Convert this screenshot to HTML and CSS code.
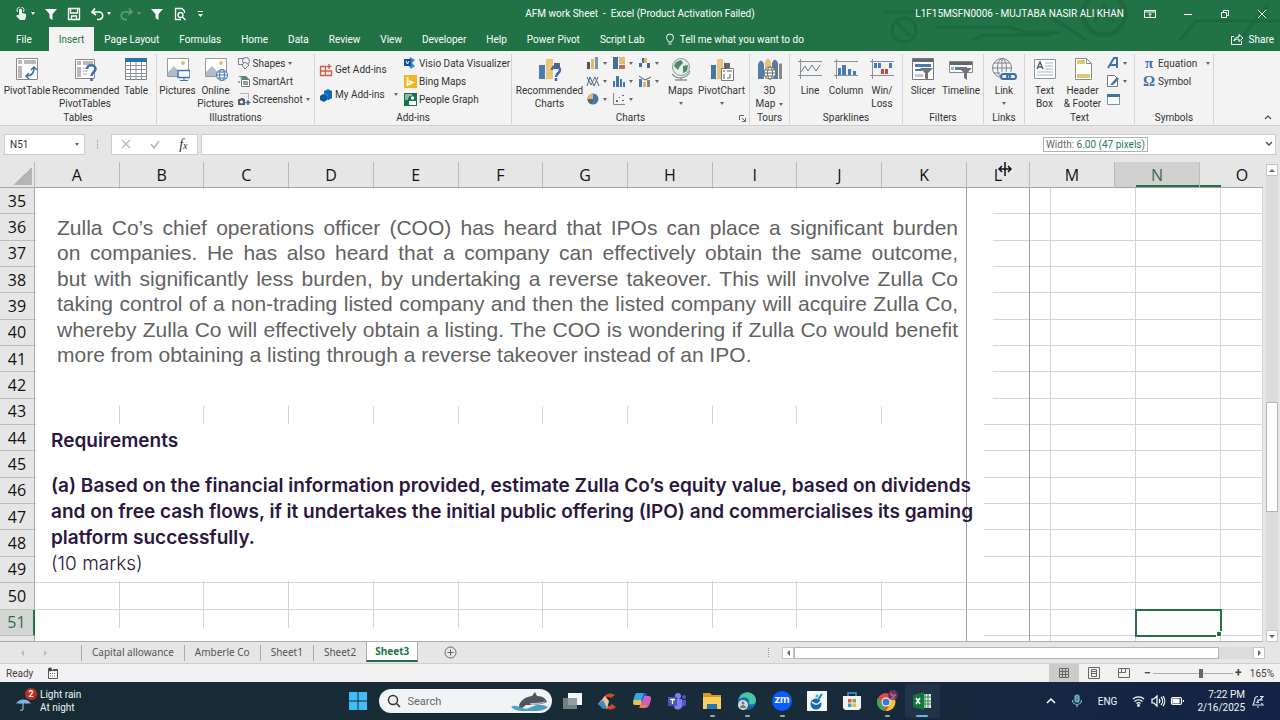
FILE: index.html
```html
<!DOCTYPE html>
<html lang="en">
<head>
    <meta charset="UTF-8">
    <meta name="viewport" content="width=device-width, initial-scale=1.0">
    <title>AFM work Sheet - Excel</title>
    <link rel="stylesheet" href="styles.css">
</head>
<body>
    <header class="top">
        <svg class="circuit" width="420" height="51" viewBox="0 0 420 51" fill="none" stroke="#1b633b" stroke-width="3">
            <path d="M24 12H70M76 27H150L168 33H200M112 40L124 35H190M192 18L226 40M320 40L336 21H420M380 40L408 4"/>
            <circle cx="44" cy="30" r="12"/><path d="M36 22L50 36"/>
            <circle cx="244" cy="14" r="21" stroke-width="5"/><path d="M234 22L244 6L254 22"/>
        </svg>

        <div class="titlebar">
            <div class="quick">
                <button aria-label="Touch mode"><svg width="14" height="14" viewBox="0 0 14 14"><path d="M5 8V3a1.500 1.500 0 0 1 3 0v3l4 1v3l-1 3H6L2 9l1-1z" fill="#e8f3ec"/><path d="M3.500 5a3.500 3.500 0 1 1 6 0" fill="none" stroke="#e8f3ec"/></svg><i class="caret"></i></button>
                <button aria-label="Filter"><svg width="14" height="14" viewBox="0 0 14 14"><path d="M1 2h12L8.500 7v6l-3-2V7z" fill="#fff"/></svg></button>
                <button aria-label="Save"><svg width="14" height="14" viewBox="0 0 14 14" fill="none" stroke="#fff" stroke-width="1.300"><path d="M1.500 1.500h11v11h-11zM3.500 2v4h7V2M4.500 12V9h5v3"/></svg></button>
                <button aria-label="Undo"><svg width="14" height="14" viewBox="0 0 14 14" fill="none" stroke="#fff" stroke-width="1.700"><path d="M5 1.500L2 5l4 3M2.500 5H9a3.500 3.500 0 0 1 0 7.500H7"/></svg><i class="caret"></i></button>
                <button class="dim" aria-label="Redo"><svg width="14" height="14" viewBox="0 0 14 14" fill="none" stroke="#fff" stroke-width="1.500"><path d="M9 1.500L12 5 8 8M11.500 5H5a3.500 3.500 0 0 0 0 7.500h2"/></svg><i class="caret"></i></button>
                <button aria-label="Filter"><svg width="14" height="14" viewBox="0 0 14 14"><path d="M1 2h12L8.500 7v6l-3-2V7z" fill="#fff"/></svg></button>
                <button aria-label="Print preview"><svg width="14" height="14" viewBox="0 0 14 14" fill="none" stroke="#fff" stroke-width="1.300"><path d="M11.500 6V4L9 1.500H2.500v11H8"/><circle cx="7.500" cy="8" r="2.500"/><path d="M9.500 10l3 3"/></svg></button>
                <button aria-label="Customize toolbar"><svg width="8" height="8" viewBox="0 0 8 8"><path d="M2 1h5v1H2zM2 4h5L4.500 7z" fill="#fff"/></svg></button>
            </div>
            <h1 class="doc-title">AFM work Sheet&nbsp; -&nbsp; Excel (Product Activation Failed)</h1>
            <div class="account">
                <span class="user">L1F15MSFN0006 - MUJTABA NASIR ALI KHAN</span>
                <button aria-label="Ribbon options"><svg width="12" height="10" viewBox="0 0 12 10" fill="none" stroke="#fff"><path d="M.5 1.500h11v7H.5zM.5 3h11M6 8V4.500M4.500 6L6 4.500 7.500 6"/></svg></button>
                <button aria-label="Minimize"><svg width="10" height="10" viewBox="0 0 10 10" stroke="#fff"><path d="M1 5.500h8"/></svg></button>
                <button aria-label="Restore"><svg width="10" height="10" viewBox="0 0 10 10" fill="none" stroke="#fff"><path d="M1.500 3.500h5v5h-5zM3.500 3V1.500h5v5H7"/></svg></button>
                <button aria-label="Close"><svg width="10" height="10" viewBox="0 0 10 10" stroke="#fff"><path d="M1 1l8 8M9 1L1 9"/></svg></button>
            </div>
        </div>

        <nav class="tabs">
            <button class="file">File</button>
            <button class="active">Insert</button>
            <button>Page Layout</button>
            <button>Formulas</button>
            <button>Home</button>
            <button>Data</button>
            <button>Review</button>
            <button>View</button>
            <button>Developer</button>
            <button>Help</button>
            <button>Power Pivot</button>
            <button>Script Lab</button>
            <button class="tell"><svg width="10" height="13" viewBox="0 0 10 13" fill="none" stroke="#fff"><path d="M3.500 9C3 7 1.500 6.500 1.500 4.500a3.500 3.500 0 0 1 7 0C8.500 6.500 7 7 6.500 9zM3.500 11h3"/></svg>Tell me what you want to do</button>
            <button class="share"><svg width="13" height="12" viewBox="0 0 13 12" fill="none" stroke="#fff"><path d="M3 3.500H.5v8h10V8M3 8c.5-3 2-4 5-4V1.500L12 5 8 8.500V6C5.500 6 4 6.500 3 8z"/></svg>Share</button>
        </nav>
    </header>

    <section class="ribbon" aria-label="Insert">
        <div class="group">
            <div class="tools tables">
                <button class="big"><svg width="24" height="24" viewBox="0 0 24 24"><path d="M1.500 1.500h21v21h-21z" fill="#fff" stroke="#8a8a8a"/><path d="M3 3h4v4H3zM9 3h12v4H9zM3 9h4v12H3z" fill="#b9b9b9"/><path d="M11 19c5 0 8-2 8-8M16 13l3-3 3 3M14 16l-3 3 3 3" fill="none" stroke="#3c6db0" stroke-width="1.500"/></svg>PivotTable</button>
                <button class="big"><svg width="24" height="24" viewBox="0 0 24 24"><path d="M2.500 2.500h19v19h-19z" fill="#fff" stroke="#8a8a8a"/><path d="M4 4h4v4H4zM10 4h10v4H10zM4 10h4v10H4z" fill="#b9b9b9"/><path d="M10 11h6M10 14h5M10 17h4" stroke="#aaa"/><path d="M14 12c0-5 8.500-5 8.500 0 0 3-4 3-4 7M18.500 21v3" fill="none" stroke="#3c6db0" stroke-width="2.600"/></svg>Recommended<br>PivotTables</button>
                <button class="big"><svg width="24" height="24" viewBox="0 0 24 24"><path d="M1.500 1.500h21v21h-21z" fill="#fff" stroke="#808080"/><path d="M1 1h22v4H1z" fill="#2d70ac"/><path d="M1 8.500h22M1 12.500h22M1 16.500h22M1 19.500h22M6.500 5v18M12 5v18M17.500 5v18" stroke="#8b9299"/></svg>Table</button>
            </div>
            <h2>Tables</h2>
        </div>

        <div class="group">
            <div class="tools illustrations">
                <button class="big"><svg width="24" height="24" viewBox="0 0 24 24"><path d="M1.500 1.500h21v18h-21z" fill="#fff" stroke="#999"/><circle cx="17" cy="6" r="2" fill="#dcc06c"/><path d="M2 19v-4l6-6 9 10z" fill="#b2bdcc"/><path d="M12 13.500h12v7H12z" fill="#fff" stroke="#3c75bc" stroke-width="1.500"/><path d="M18 21v2M14 23.500h8" stroke="#3c75bc"/></svg>Pictures</button>
                <button class="big"><svg width="24" height="24" viewBox="0 0 24 24"><path d="M1.500 1.500h21v18h-21z" fill="#fff" stroke="#999"/><circle cx="17" cy="6" r="2" fill="#dcc06c"/><path d="M2 19v-4l6-6 9 10z" fill="#b2bdcc"/><g fill="#fff" stroke="#4378ae"><circle cx="18" cy="18" r="5.500"/><ellipse cx="18" cy="18" rx="2.500" ry="5.500"/><path d="M12.500 18h11M13.500 15h9M13.500 21h9"/></g></svg>Online<br>Pictures</button>
                <div class="list">
                    <button><svg width="14" height="14" viewBox="0 0 14 14" fill="#f3f3f3" stroke="#6c7c91"><path d="M1.500 2.500h7v6h-7z"/><circle cx="9" cy="5" r="3.500"/><path d="M8 6l4 3-4 4-3-4z"/></svg>Shapes<i class="caret"></i></button>
                    <button><svg width="14" height="14" viewBox="0 0 14 14"><path d="M1 2h8l3 3H3l2-1z" fill="#568875"/><path d="M4.500 5.500h8v7h-8z" fill="#fff" stroke="#777"/><path d="M6 7h5v4H6zM1 7h2v2H1z" fill="#87a798"/></svg>SmartArt</button>
                    <button><svg width="14" height="14" viewBox="0 0 14 14"><path d="M3.500 1.500h8v6" fill="none" stroke="#777" stroke-dasharray="1 1"/><path d="M1 7h2l1-1h2l1 1h1v6H1z" fill="#53606c"/><circle cx="4.500" cy="10" r="1.500" fill="#fff"/><path d="M11 8v5M8.500 10.500h5" stroke="#2c69a5" stroke-width="1.500"/></svg>Screenshot<i class="caret"></i></button>
                </div>
            </div>
            <h2>Illustrations</h2>
        </div>

        <div class="group">
            <div class="tools addins">
                <div class="list loose">
                    <button><svg width="14" height="14" viewBox="0 0 14 14" fill="none" stroke="#d35a44" stroke-width="1.300"><path d="M1.500 3.500h5v9h-5zM1.500 8h11v4.500h-6M6.500 3.500V8M10 1v5M7.500 3.500h5"/></svg>Get Add-ins</button>
                    <button><svg width="14" height="14" viewBox="0 0 14 14"><path d="M5 3l4-2 4 2v7l-4 2-4-2z" fill="#1979cb"/><path d="M1 8l3-2 4 2v4l-3 2-4-2z" fill="#0b569f"/><path d="M5 3l4 3v6l4-2V3z" fill="#1167b6"/></svg>My Add-ins<i class="caret wide"></i></button>
                </div>
                <div class="list">
                    <button><svg width="14" height="14" viewBox="0 0 14 14"><path d="M7 1l5 3-3 3 3 3-4 3-3-4z" fill="#338bd6"/><path d="M1 3h7v7H1z" fill="#174f9e"/><path d="M3 5l1.500 3L6 5" fill="none" stroke="#fff"/></svg>Visio Data Visualizer</button>
                    <button><svg width="14" height="14" viewBox="0 0 14 14"><path d="M1 1h13v13H1z" fill="#f1b51d"/><path d="M4.500 3v8l5-2.500L6 7" fill="none" stroke="#fff" stroke-width="1.800"/></svg>Bing Maps</button>
                    <button><svg width="14" height="14" viewBox="0 0 14 14"><path d="M1 1h13v13H1z" fill="#19714d"/><path d="M2 3h7M2 5h4M2 7h3" stroke="#fff"/><circle cx="9.500" cy="6" r="1.700" fill="#fff"/><path d="M6 13V9h7v4z" fill="#fff"/></svg>People Graph</button>
                </div>
            </div>
            <h2>Add-ins</h2>
        </div>

        <div class="group">
            <div class="tools charts">
                <button class="big"><svg width="24" height="24" viewBox="0 0 24 24"><path d="M1 8h6v14H1z" fill="#4c7cad"/><path d="M8 2h7v20H8z" fill="#e9c57b"/><path d="M16 6h6v6h-6z" fill="#666"/><path d="M14 13c0-5 8-5 8 0 0 3-4 3-4 7M18 21v3" fill="none" stroke="#3269b1" stroke-width="2.500"/></svg>Recommended<br>Charts</button>
                <div class="chart-grid">
                    <button aria-label="Column chart"><svg width="14" height="14" viewBox="0 0 14 14"><path d="M1 6h3v7H1z" fill="#555"/><path d="M5 3h3v10H5z" fill="#e1b961"/><path d="M9 1h3v12H9z" fill="#7c92aa"/></svg><i class="caret"></i></button>
                    <button aria-label="Hierarchy chart"><svg width="14" height="14" viewBox="0 0 14 14"><path d="M1 1h5v12H1z" fill="#416f9e"/><path d="M7 1h6v7H7z" fill="#e3bd72"/><path d="M7 9h6v4H7z" fill="#c56b50"/></svg><i class="caret"></i></button>
                    <button aria-label="Waterfall chart"><svg width="14" height="14" viewBox="0 0 14 14"><path d="M1 7h3v4H1zM4 2h2v5H4z" fill="#3d6b9c"/><path d="M6 2h3v5H6z" fill="#e1b961"/><path d="M9 7h3v5H9z" fill="#3d6b9c"/></svg><i class="caret"></i></button>
                    <button aria-label="Line chart"><svg width="14" height="14" viewBox="0 0 14 14" fill="none"><path d="M1 12L4 3l4 9 4-9" stroke="#3d6b9c"/><path d="M1 3l4 8 4-8 4 9" stroke="#666"/></svg><i class="caret"></i></button>
                    <button aria-label="Statistic chart"><svg width="14" height="14" viewBox="0 0 14 14"><path d="M1 7h2v6H1zM4 2h3v11H4zM8 5h2v8H8zM11 8h2v5h-2z" fill="#4577aa"/></svg><i class="caret"></i></button>
                    <button aria-label="Combo chart"><svg width="14" height="14" viewBox="0 0 14 14"><path d="M1 5h3v8H1z" fill="#4577aa"/><path d="M5 8h3v5H5z" fill="#e1b961"/><path d="M9 6h3v7H9z" fill="#888"/><path d="M1 2l6 4 6-3" fill="none" stroke="#555"/></svg><i class="caret"></i></button>
                    <button aria-label="Pie chart"><svg width="14" height="14" viewBox="0 0 14 14"><circle cx="7" cy="7" r="5.500" fill="#4577aa"/><path d="M7 7V1.500A5.500 5.500 0 0 0 1.500 7z" fill="#e0ba70"/><path d="M7 7H1.500A5.500 5.500 0 0 0 5 12z" fill="#666"/></svg><i class="caret"></i></button>
                    <button aria-label="Scatter chart"><svg width="14" height="14" viewBox="0 0 14 14"><path d="M1.500 1v11.500H13" fill="none" stroke="#888"/><path d="M4 8h2v2H4zM7 5h1v1H7zM10 8h2v1h-2zM10 3h2v1h-2z" fill="#4c6e90"/></svg><i class="caret"></i></button>
                </div>
                <button class="big"><svg width="24" height="24" viewBox="0 0 24 24"><circle cx="12" cy="10" r="8.500" fill="#e6eee9" stroke="#8b9791"/><path d="M7 5l5-2 2 3-3 3-2 4-4-4zM14 9l5-1-1 6-4 2z" fill="#4d896a"/><path d="M3 17c5 6 15 5 18-3M12 20v3M6 23h12" fill="none" stroke="#899b91" stroke-width="1.300"/></svg>Maps<i class="caret below"></i></button>
                <button class="big"><svg width="24" height="24" viewBox="0 0 24 24"><path d="M1 8h5v14H1z" fill="#4777a9"/><path d="M7 2h6v20H7z" fill="#e8c67d"/><path d="M14 6h6v5h-6z" fill="#666"/><path d="M11.500 11.500h12v12h-12z" fill="#fff" stroke="#777"/><path d="M13 13h2v2h-2zM17 13h5v2h-5zM13 17h2v5h-2z" fill="#aaa"/><path d="M17 21h3v-4" fill="none" stroke="#666"/></svg>PivotChart<i class="caret below"></i></button>
            </div>
            <h2>Charts</h2>
            <svg class="launcher" width="7" height="7" viewBox="0 0 7 7" fill="none" stroke="#666"><path d="M.5 5V.5H5M3 3l3 3M6.500 3v3.500H3"/></svg>
        </div>

        <div class="group">
            <div class="tools single">
                <button class="big"><svg width="26" height="24" viewBox="0 0 26 24"><path d="M1 22V7q3-7 6 0v15z" fill="#527ca9"/><path d="M8 22V5q3-7 6 0v17z" fill="#e7c076"/><path d="M15 22V6q3-7 6 0v16z" fill="#547ca7"/><path d="M22 22V7q3-2 3 1v14z" fill="#888"/><g fill="#fff" stroke="#666"><circle cx="13" cy="16" r="6"/><ellipse cx="13" cy="16" rx="2.500" ry="6"/><path d="M7 16h12M8 13h10M8 19h10"/></g></svg>3D<br>Map<i class="caret"></i></button>
            </div>
            <h2>Tours</h2>
        </div>

        <div class="group">
            <div class="tools sparklines">
                <button class="big"><svg width="24" height="24" viewBox="0 0 24 24" fill="none" stroke="#8c9197"><path d="M2.500 2v20M0 4.500h24M0 18.500h24"/><path d="M3 15l4-6 3 5 4-6 4 6 4-6" stroke="#6a7685"/></svg>Line</button>
                <button class="big"><svg width="24" height="24" viewBox="0 0 24 24"><path d="M2.500 2v20M0 4.500h24M0 18.500h24" stroke="#8c9197"/><path d="M4 11h3v7H4zM8 8h4v10H8zM14 12h3v6h-3zM19 14h3v4h-3z" fill="#467bb4"/></svg>Column</button>
                <button class="big"><svg width="24" height="24" viewBox="0 0 24 24"><path d="M2.500 2v20M0 4.500h24M0 18.500h24" stroke="#8c9197"/><path d="M4 6h3v5H4zM8 6h3v5H8zM19 6h3v5h-3z" fill="#467bb4"/><path d="M11 12h3v5h-3zM15 12h3v5h-3z" fill="#c6453c"/></svg>Win/<br>Loss</button>
            </div>
            <h2>Sparklines</h2>
        </div>

        <div class="group">
            <div class="tools filters">
                <button class="big"><svg width="24" height="24" viewBox="0 0 24 24"><path d="M1.500 1.500h21v21h-21z" fill="#fff" stroke="#777"/><path d="M2 2h20v3H2z" fill="#606b73"/><path d="M4 7h16v3H4zM4 12h7v2H4z" fill="#4c7cad"/><path d="M4 17h8v3H4z" fill="#bac8d8"/><path d="M9 11h13l-5 5v7l-3-2v-5z" fill="#737373"/></svg>Slicer</button>
                <button class="big"><svg width="24" height="24" viewBox="0 0 24 24"><path d="M.5 4.500h23v11H.5z" fill="#fff" stroke="#888"/><path d="M1 5h22v3H1z" fill="#666"/><path d="M2 10h3v3H2z" fill="#aaa"/><path d="M6 10h12v3H6z" fill="#507eb3"/><path d="M10 11h13l-5 5v7l-3-2v-5z" fill="#737373"/></svg>Timeline</button>
            </div>
            <h2>Filters</h2>
        </div>

        <div class="group">
            <div class="tools single">
                <button class="big"><svg width="26" height="24" viewBox="0 0 26 24" fill="none" stroke="#7e8489"><circle cx="11" cy="11" r="9.500"/><ellipse cx="11" cy="11" rx="4.500" ry="9.500"/><path d="M1.500 11h19M3 6h16M3 16h16M11 1v20"/><path d="M9 15h17v9H9z" fill="#f3f3f3" stroke="none"/><rect x="10" y="17" width="9" height="5" rx="2.500" stroke="#3c6fa9" stroke-width="2"/><rect x="16" y="17" width="9" height="5" rx="2.500" stroke="#3c6fa9" stroke-width="2"/></svg>Link<i class="caret below"></i></button>
            </div>
            <h2>Links</h2>
        </div>

        <div class="group">
            <div class="tools text-tools">
                <button class="big"><svg width="24" height="24" viewBox="0 0 24 24"><path d="M1.500 2.500h21v19h-21z" fill="#fff" stroke="#8c959e"/><path d="M4 12l3-7 3 7M5 10h4" fill="none" stroke="#44556a" stroke-width="1.300"/><path d="M12 6h8M12 9h8M12 12h8M4 15h16M4 18h16" stroke="#a8b1ba"/></svg>Text<br>Box</button>
                <button class="big"><svg width="24" height="24" viewBox="0 0 24 24"><path d="M4.500 1.500h11l5 5v16h-16z" fill="#fff" stroke="#8b8b8b"/><path d="M15.500 1.500v5h5" fill="none" stroke="#8b8b8b"/><path d="M6 3h8v4H6zM6 17h13v4H6z" fill="#dec96f"/></svg>Header<br>&amp; Footer</button>
                <div class="list">
                    <button aria-label="WordArt"><svg width="14" height="14" viewBox="0 0 14 14"><path d="M2 12L8 2h3v10M4 9h6" fill="none" stroke="#3b72b1" stroke-width="2"/></svg><i class="caret"></i></button>
                    <button aria-label="Signature line"><svg width="14" height="14" viewBox="0 0 14 14"><path d="M1.500 1.500h7l3 3v8h-10z" fill="#fff" stroke="#777"/><path d="M4 11l7-8 2 2-6 6z" fill="#4578b5"/></svg><i class="caret"></i></button>
                    <button aria-label="Object"><svg width="14" height="14" viewBox="0 0 14 14"><path d="M1.500 2.500h12v10h-12z" fill="#fff" stroke="#6c99a7"/><path d="M1 2h13v3H1z" fill="#377a93"/></svg></button>
                </div>
            </div>
            <h2>Text</h2>
        </div>

        <div class="group">
            <div class="tools symbols">
                <div class="list">
                    <button><b class="glyph">π</b>Equation<i class="caret wide"></i></button>
                    <button><b class="glyph">Ω</b>Symbol</button>
                </div>
            </div>
            <h2>Symbols</h2>
        </div>

        <button class="collapse" aria-label="Collapse ribbon"><svg width="8" height="6" viewBox="0 0 8 6" fill="none" stroke="#555" stroke-width="1.300"><path d="M1 5l3-3 3 3"/></svg></button>
    </section>

    <section class="formula-bar">
        <div class="name-box">
            <input type="text" value="N51" aria-label="Name box">
            <button aria-label="Open name list"><i class="caret"></i></button>
        </div>
        <span class="grip"></span>
        <div class="fx">
            <button aria-label="Cancel"><svg width="10" height="10" viewBox="0 0 10 10" stroke="#b5b5b5" stroke-width="1.200"><path d="M1 1l8 8M9 1L1 9"/></svg></button>
            <button aria-label="Enter"><svg width="10" height="10" viewBox="0 0 10 10" fill="none" stroke="#b5b5b5" stroke-width="1.500"><path d="M1 5l3 4 5-7"/></svg></button>
            <button class="fn" aria-label="Insert function">f<small>x</small></button>
        </div>
        <div class="entry">
            <input type="text" aria-label="Formula">
            <button aria-label="Expand formula bar"><svg width="8" height="6" viewBox="0 0 8 6" fill="none" stroke="#555" stroke-width="1.500"><path d="M1 1l3 3 3-3"/></svg></button>
        </div>
        <div class="width-tip">Width: <span>6.00 (47 pixels)</span></div>
    </section>

    <main class="workspace">
        <div class="sheet">
            <table class="cells">
                <colgroup>
                    <col class="c-head">
                    <col span="11">
                    <col class="c-l">
                    <col class="c-thin"><col class="c-rest"><col class="c-thin"><col class="c-rest"><col class="c-thin"><col class="c-last">
                </colgroup>
                <thead>
                    <tr>
                        <td class="corner"></td>
                        <th>A</th><th>B</th><th>C</th><th>D</th><th>E</th><th>F</th><th>G</th><th>H</th><th>I</th><th>J</th><th>K</th>
                        <th>L</th>
                        <th colspan="2">M</th>
                        <th colspan="2" class="selected">N</th>
                        <th colspan="2" class="last">O</th>
                    </tr>
                </thead>
                <tbody id="rows"></tbody>
            </table>

            <div class="picture scenario">
                <p>
                    <span>Zulla Co’s chief operations officer (COO) has heard that IPOs can place a significant burden</span>
                    <span>on companies. He has also heard that a company can effectively obtain the same outcome,</span>
                    <span>but with significantly less burden, by undertaking a reverse takeover. This will involve Zulla Co</span>
                    <span>taking control of a non-trading listed company and then the listed company will acquire Zulla Co,</span>
                    <span>whereby Zulla Co will effectively obtain a listing. The COO is wondering if Zulla Co would benefit</span>
                    <span>more from obtaining a listing through a reverse takeover instead of an IPO.</span>
                </p>
            </div>
            <div class="picture requirements">
                <h3>Requirements</h3>
                <p>(a) Based on the financial information provided, estimate Zulla Co’s equity value, based on dividends<br>
                and on free cash flows, if it undertakes the initial public offering (IPO) and commercialises its gaming<br>
                platform successfully.</p>
                <p class="marks">(10 marks)</p>
            </div>
            <svg class="resize-cursor" width="14" height="14" viewBox="0 0 14 14" fill="none" stroke="#111" stroke-width="1.500"><path d="M7 0v14M1 7h12M4 4L1 7l3 3M10 4l3 3-3 3"/></svg>
        </div>
        <div class="vscroll">
            <button aria-label="Scroll up"><i class="arrow up"></i></button>
            <div class="track"><span></span></div>
            <button aria-label="Scroll down"><i class="arrow down"></i></button>
        </div>
    </main>

    <section class="sheet-tabs">
        <div class="sheet-nav">
            <button aria-label="Previous sheet"><i class="arrow left pale"></i></button>
            <button aria-label="Next sheet"><i class="arrow right pale"></i></button>
        </div>
        <button class="tab">Capital allowance</button>
        <button class="tab">Amberle Co</button>
        <button class="tab">Sheet1</button>
        <button class="tab">Sheet2</button>
        <button class="tab current">Sheet3</button>
        <button class="new-sheet" aria-label="New sheet"><svg width="13" height="13" viewBox="0 0 13 13" fill="none" stroke="#666"><circle cx="6.500" cy="6.500" r="5.500"/><path d="M6.500 3.500v6M3.500 6.500h6"/></svg></button>
        <span class="grip"></span>
        <div class="hscroll">
            <button aria-label="Scroll left"><i class="arrow left"></i></button>
            <div class="track"><span></span></div>
            <button aria-label="Scroll right"><i class="arrow right"></i></button>
        </div>
    </section>

    <section class="status">
        <span>Ready</span>
        <svg class="macro" width="12" height="12" viewBox="0 0 12 12"><path d="M1.500 3.500h9v8h-9z" fill="#fff" stroke="#555"/><path d="M6 2h5v2H6z" fill="#555"/><circle cx="3" cy="2.500" r="2" fill="#444"/><path d="M3 6.500h6M3 9h6" stroke="#555" stroke-dasharray="1 1"/></svg>
        <div class="views">
            <button class="on" aria-label="Normal view"><svg width="12" height="12" viewBox="0 0 12 12" fill="none" stroke="#666"><path d="M1.500 1.500h9v9h-9zM4.500 1v10M7.500 1v10M1 4.500h10M1 7.500h10"/></svg></button>
            <button aria-label="Page layout view"><svg width="12" height="12" viewBox="0 0 12 12" fill="none" stroke="#666"><path d="M.5 .5h11v11H.5zM3.500 2.500h5v7h-5zM4 4.500h4M4 6.500h4"/></svg></button>
            <button aria-label="Page break view"><svg width="12" height="12" viewBox="0 0 12 12" fill="none" stroke="#666"><path d="M.5 1.500h11v9H.5zM3.500 1.500v4H.5M7.500 1.500v4h-4"/></svg></button>
        </div>
        <div class="zoom">
            <button aria-label="Zoom out">−</button>
            <input type="range" min="0" max="100" value="61" aria-label="Zoom">
            <button aria-label="Zoom in">+</button>
            <span>165%</span>
        </div>
    </section>

    <footer class="taskbar">
        <div class="weather">
            <svg width="24" height="26" viewBox="0 0 24 26"><path d="M2 16a8 7 0 0 1 15 0c-1-1-3-1-4 0-1-1-3-1-4 0-1-1-2-1-3 0-1-1-3-1-4 0z" fill="#7fb4ea"/><path d="M9 15v6a2 2 0 0 1-3 1" fill="none" stroke="#a8b2bb" stroke-width="1.200"/></svg>
            <b class="badge">2</b>
            <p>Light rain<br>At night</p>
        </div>
        <nav class="apps">
            <button aria-label="Start"><svg width="20" height="20" viewBox="0 0 20 20"><path d="M1 1h8.500v8.500H1zM10.500 1H19v8.500h-8.500zM1 10.500h8.500V19H1zM10.500 10.500H19V19h-8.500z" fill="#41bcf4"/></svg></button>
            <label class="search">
                <svg width="14" height="14" viewBox="0 0 14 14" fill="none" stroke="#333" stroke-width="1.500"><circle cx="6" cy="6" r="4.500"/><path d="M9.500 9.500L13 13"/></svg>
                <input type="search" placeholder="Search" aria-label="Search">
                <svg width="40" height="22" viewBox="0 0 40 22"><path d="M1 17c6-4 12 4 18 1s12-5 19-1c-5 5-14 4-21 4-6 0-12 0-16-4z" fill="#4b9fc4"/><path d="M9 17c0-6 6-10 13-11l3-4 2 4c6 0 9 3 10 6-6 3-15 3-21 3l-4 3z" fill="#4b5660"/><path d="M20 13c5 0 11 0 16-2-3 3-9 4-15 4z" fill="#b6c0c6"/></svg>
            </label>
            <button aria-label="Task view"><svg width="20" height="20" viewBox="0 0 20 20"><path d="M6 2h14v12H6z" fill="#f2f4f5"/><path d="M1 7h14v11H1z" fill="#878d91" opacity=".85"/></svg></button>
            <button aria-label="CCleaner"><svg width="20" height="20" viewBox="0 0 20 20"><path d="M18 4A8 8 0 1 0 19 16l-4-3a4.500 4.500 0 1 1-1-6z" fill="#d6452b"/><path d="M1 13l7-8 4 5-2 8z" fill="#e7c89e"/><path d="M1 13l5-4 4 8-4 1z" fill="#3c8bc8"/></svg></button>
            <button aria-label="Copilot"><svg width="20" height="20" viewBox="0 0 20 20"><path d="M5 2h7l-3 12H3c-3 0-2-4-1-7s1-5 3-5z" fill="#36a7df"/><path d="M2 9h9l-2 5H3c-2 0-2-3-1-5z" fill="#e6c442"/><path d="M12 5h5c3 0 2 4 1 7s-2 5-5 5H7z" fill="#cd60bd"/><path d="M12 2c2 0 3 1 3 3h-3l-2 6-1-1z" fill="#2b5bce"/><path d="M8 14h7l-2 3H8z" fill="#ea814d"/></svg></button>
            <button aria-label="Teams"><svg width="20" height="20" viewBox="0 0 20 20"><circle cx="11" cy="5" r="3" fill="#7b83eb"/><circle cx="17" cy="6" r="2" fill="#5059c9"/><path d="M7 8h8v6a4 4 0 0 1-8 1z" fill="#7b83eb"/><path d="M15 9h4v4c0 2-2 3-4 2z" fill="#5059c9"/><path d="M1 6h9v9H1z" fill="#4b53bc"/><path d="M3 8.500h5M5.500 8.500V13" stroke="#fff" stroke-width="1.300"/></svg></button>
            <button class="running" aria-label="File Explorer"><svg width="20" height="20" viewBox="0 0 20 20"><path d="M1 2h7l2 2h9v4H1z" fill="#d89b1d"/><path d="M1 6h18v12H1z" fill="#f8cf5b"/><path d="M5 13h10v5H5z" fill="#2276ba"/></svg></button>
            <button class="running" aria-label="Edge"><svg width="20" height="20" viewBox="0 0 20 20"><circle cx="10" cy="10" r="9" fill="#1877b9"/><path d="M2 8c2-9 17-9 17 2 0 4-6 4-7 2 2-5-5-8-10-4z" fill="#4ac7a2"/><path d="M5 11c0-3 5-4 6-1-2 4 2 6 6 5-4 5-11 4-12-4z" fill="#145b9f"/><circle cx="6" cy="14" r="5" fill="#d8dada"/><circle cx="6" cy="12" r="1.500" fill="#777"/><path d="M3 17c0-4 6-4 6 0z" fill="#777"/></svg></button>
            <button class="running zoom-app" aria-label="Zoom"><b>zm</b></button>
            <button aria-label="Drawing app"><svg width="20" height="20" viewBox="0 0 20 20"><path d="M0 0h20v20H0z" fill="#f5f8f9"/><circle cx="9" cy="13" r="5.500" fill="#1769ad"/><path d="M5 11c3 3 6 3 9-1" fill="none" stroke="#f5f8f9" stroke-width="1.500"/><path d="M11 9l4-6" stroke="#1680bd" stroke-width="2"/><circle cx="10" cy="5" r="1.500" fill="#37b8d6"/></svg></button>
            <button aria-label="Microsoft Store"><svg width="20" height="20" viewBox="0 0 20 20"><path d="M6 6V2h8v4" fill="none" stroke="#37a1de" stroke-width="1.500"/><path d="M1 5h18v12l-2 2H3l-2-2z" fill="#eef1f3"/><path d="M6 8h3.500v3.500H6z" fill="#e8523d"/><path d="M10.500 8H14v3.500h-3.500z" fill="#78ae3d"/><path d="M6 12.500h3.500V16H6z" fill="#319ed5"/><path d="M10.500 12.500H14V16h-3.500z" fill="#efb832"/></svg></button>
            <button class="running" aria-label="Chrome"><svg width="22" height="22" viewBox="0 0 22 22"><circle cx="10" cy="12" r="9" fill="#e34a3b"/><path d="M2 8l5 7 3 6a9 9 0 0 1-8-13z" fill="#3aa856"/><path d="M10 21l4-7V8h4.500A9 9 0 0 1 10 21z" fill="#f4c431"/><circle cx="10" cy="12" r="4.500" fill="#fff"/><circle cx="10" cy="12" r="3.500" fill="#3c79d8"/><circle cx="17" cy="5" r="5" fill="#702e60"/><path d="M14 4h2v2h3V4M15 8h4" fill="none" stroke="#bc8aaa"/></svg></button>
            <button class="running focused" aria-label="Excel"><svg width="20" height="20" viewBox="0 0 20 20"><path d="M8 3h11v14H8z" fill="#dff0e7"/><path d="M13 3v14M16 3v14M11 6h8M11 10h8M11 13h8" stroke="#2c8454"/><path d="M1 4l11-3v18L1 16z" fill="#167442"/><path d="M4 7l4 6M8 7l-4 6" stroke="#fff" stroke-width="1.500"/></svg></button>
        </nav>
        <div class="tray">
            <button aria-label="Hidden icons"><svg width="10" height="8" viewBox="0 0 10 8" fill="none" stroke="#fff" stroke-width="1.500"><path d="M1 6l4-4 4 4"/></svg></button>
            <svg width="12" height="14" viewBox="0 0 12 14" fill="none" stroke="#83c2c9" stroke-width="1.200"><rect x="4" y="1" width="4" height="7" rx="2" fill="#4b8f9c"/><path d="M1.500 6a4.500 4.500 0 0 0 9 0M6 10.500V13"/></svg>
            <span class="lang">ENG</span>
            <svg width="52" height="14" viewBox="0 0 52 14" fill="none" stroke="#fff" stroke-width="1.200"><path d="M1 5a8 8 0 0 1 11 0M2.500 7.500a6 6 0 0 1 8 0M4.500 9.500a3 3 0 0 1 4 0"/><circle cx="6.500" cy="11.500" r=".8" fill="#fff"/><path d="M20 5h2l3-3v10l-3-3h-2zM27 5a3 3 0 0 1 0 4M29 3a6 6 0 0 1 0 8M31 2a8 8 0 0 1 0 10"/><rect x="39.500" y="3.500" width="10" height="7" rx="1.500"/><path d="M41 5h6v4h-6z" fill="#fff"/><path d="M51.500 6v2"/></svg>
            <p>7:22 PM<br>2/16/2025</p>
            <svg width="12" height="13" viewBox="0 0 12 13" fill="none" stroke="#d9e3ef" stroke-width="1.200"><path d="M6 1.500C3 1.500 2.500 4 2.500 6L1 10h10L9.500 8M5 12h2M8 1.500h3L8 5h3M5 5h2L5 7.500h2"/></svg>
        </div>
    </footer>

    <script src="script.js"></script>
</body>
</html>
```
FILE: styles.css
```css
* {
    box-sizing: border-box;
}

body {
    margin: 0;
    height: 100vh;
    min-height: 600px;
    display: flex;
    flex-direction: column;
    overflow: hidden;
    font-family: Roboto, "Open Sans", sans-serif;
    font-size: 10px;
    line-height: 13px;
    color: #333;
    background: #e6e6e6;
}

button,
input {
    font: inherit;
    color: inherit;
    border: 0;
    padding: 0;
    margin: 0;
    background: none;
    outline: none;
}

button {
    display: flex;
    align-items: center;
    justify-content: center;
    white-space: nowrap;
}

h1, h2, h3, p {
    margin: 0;
    font-size: inherit;
    font-weight: normal;
}

svg {
    display: block;
    flex: none;
}

.caret {
    display: inline-block;
    flex: none;
    border: 2px solid transparent;
    border-top: 3px solid #666;
    border-bottom: 0;
    margin-left: 4px;
    vertical-align: middle;
}

.grip {
    width: 2px;
    height: 9px;
    border-left: 1px dotted #999;
}

/* Title bar and ribbon tabs */
.top {
    position: relative;
    flex: none;
    background: #217346;
    color: #fff;
}

.circuit {
    position: absolute;
    right: 0;
    top: 0;
    opacity: 0.6;
}

.titlebar {
    position: relative;
    height: 27px;
    display: grid;
    grid-template-columns: 1fr auto 1fr;
    align-items: center;
}

.quick {
    display: flex;
    align-items: center;
    gap: 9px;
    padding-left: 14px;
}

.quick .caret {
    border-top-color: #fff;
    margin-left: 3px;
}

.dim {
    opacity: 0.3;
}

.account {
    display: flex;
    align-items: center;
    justify-content: flex-end;
    gap: 27px;
    padding-right: 13px;
}

.account .user {
    margin-right: -7px;
    white-space: nowrap;
}

.tabs {
    position: relative;
    height: 24px;
    display: flex;
    padding: 0 6px;
}

.tabs button {
    padding: 0 10px;
}

.tabs .file {
    margin-right: 7px;
}

.tabs .active {
    background: #f3f3f3;
    color: #217346;
}

.tabs .tell,
.tabs .share {
    gap: 5px;
}

.tabs .share {
    margin-left: auto;
    padding: 0;
}

/* Ribbon */
.ribbon {
    flex: none;
    height: 75px;
    display: grid;
    grid-template-columns: 157px 158px 197px 238px 40px 113px 81px 41px 110px 79px 1fr;
    background: #f3f3f3;
    border-bottom: 1px solid #cfcfcf;
}

.group {
    position: relative;
    display: flex;
    flex-direction: column;
    justify-content: space-between;
    margin: 3px 0 1px;
    border-right: 1px solid #d4d4d4;
}

.group h2 {
    text-align: center;
}

.tools {
    display: grid;
    align-items: start;
    justify-content: center;
    padding-top: 3px;
}

.tables { grid-template-columns: 50px 66px 36px; }
.illustrations { grid-template-columns: 38px 38px 78px; }
.addins { grid-template-columns: 84px 108px; }
.charts { grid-template-columns: 72px 80px 30px 52px; }
.single { grid-template-columns: 38px; }
.sparklines { grid-template-columns: 34px 38px 34px; }
.filters { grid-template-columns: 36px 40px; }
.text-tools { grid-template-columns: 34px 42px 28px; }
.symbols { grid-template-columns: 68px; }

.big {
    display: block;
    line-height: 13px;
    text-align: center;
}

.big svg {
    margin: 0 auto 3px;
}

.big .caret.below {
    display: block;
    width: 4px;
    margin: 5px auto 0;
}

.list,
.chart-grid {
    display: grid;
    grid-auto-rows: 18px;
    margin-top: -3px;
    padding-left: 2px;
}

.list button {
    justify-content: flex-start;
    gap: 2px;
}

.list .caret {
    margin-left: 1px;
}

.list .caret.wide {
    margin-left: 7px;
}

.list.loose {
    grid-auto-rows: 25px;
    padding-top: 3px;
}

.chart-grid {
    grid-template-columns: repeat(3, 26px);
    padding-left: 0;
}

.chart-grid button {
    justify-content: flex-start;
}

.chart-grid .caret {
    margin-left: 3px;
}

.glyph {
    width: 14px;
    font-family: "Liberation Serif", serif;
    font-size: 15px;
    color: #3f72ae;
}

.launcher {
    position: absolute;
    right: 3px;
    bottom: 2px;
}

.collapse {
    align-self: end;
    justify-self: end;
    padding: 5px 8px;
}

/* Formula bar */
.formula-bar {
    position: relative;
    flex: none;
    height: 36px;
    display: flex;
    align-items: center;
    padding: 0 4px;
}

.formula-bar > .grip {
    margin: 0 12px;
}

.name-box,
.fx,
.entry {
    height: 21px;
    display: flex;
    align-items: center;
    background: #fff;
    border: 1px solid #cdcdcd;
}

.name-box {
    width: 81px;
    padding: 0 5px;
}

.name-box input {
    flex: 1;
    width: 50px;
}

.fx {
    width: 87px;
    justify-content: space-around;
    margin-right: 3px;
}

.fn {
    font-family: "Liberation Serif", serif;
    font-size: 14px;
    font-style: italic;
}

.fn small {
    font-size: 10px;
    padding-top: 3px;
}

.entry {
    flex: 1;
    padding-right: 2px;
}

.entry input {
    flex: 1;
}

.width-tip {
    position: absolute;
    right: 132px;
    top: 11px;
    height: 15px;
    padding: 0 2px;
    background: #fff;
    border: 1px solid #a9b8b0;
    color: #666;
    white-space: nowrap;
}

.width-tip span {
    color: #2d7a58;
}

/* Worksheet */
.workspace {
    flex: 1;
    min-height: 0;
    display: flex;
}

.sheet {
    position: relative;
    flex: 1;
    overflow: hidden;
}

.cells {
    width: 100%;
    height: 100%;
    table-layout: fixed;
    border-collapse: separate;
    border-spacing: 0;
    background: #fff;
    border-bottom: 1px solid #adadad;
}

.c-head { width: 35px; }
.c-l { width: 63px; }
.c-thin { width: 21px; }
.c-rest { width: 64px; }
.c-last { width: 42px; }

.cells th,
.cells td {
    padding: 0;
}

.cells th {
    font-family: "Open Sans", sans-serif;
    font-size: 16px;
    line-height: 24px;
    font-weight: normal;
    color: #111;
    background: #e6e6e6;
}

.cells thead th,
.cells .corner {
    height: 26px;
    border-right: 1px solid #bbb;
    border-bottom: 1px solid #a6a6a6;
}

.cells .corner {
    background: linear-gradient(135deg, transparent 50%, #b4b4b4 50%) right 2px bottom 2px / 18px 18px no-repeat #e6e6e6;
}

.cells thead .selected {
    color: #376b50;
    background: linear-gradient(to right, transparent 21px, #217346 21px) bottom / 100% 2px no-repeat #d0d0d0;
}

.cells thead .last {
    padding-left: 21px;
    border-right: 0;
    background: linear-gradient(#217346, #217346) left bottom / 21px 2px no-repeat #e6e6e6;
}

.cells tbody th {
    border-right: 1px solid #a6a6a6;
    border-bottom: 1px solid #bdbdbd;
}

.cells tbody td {
    border-right: 1px solid #d4d4d4;
    border-bottom: 1px solid #d4d4d4;
}

.cells tbody .edge {
    border-right-color: #a0a0a0;
}

.cells tbody .column-l {
    border-right-color: #a0a0a0;
}

/* grid line hidden behind the picture's right margin */
.cells tbody .covered {
    border-bottom: 0;
    background: linear-gradient(to right, transparent 17px, #d4d4d4 17px) bottom / 100% 1px no-repeat;
}

.cells tbody .covered.deep {
    background: linear-gradient(to right, transparent 26px, #d4d4d4 26px) bottom / 100% 1px no-repeat;
}

.cells tbody .current th {
    color: #376b50;
    background: #d2d6d3;
    border-right: 2px solid #217346;
}

.cells tbody .current .plain {
    border-bottom-color: transparent;
}

.cells tbody .current .plain:not(.edge) {
    border-right: 0;
    background: linear-gradient(#d4d4d4, #d4d4d4) right top / 1px 18px no-repeat;
}

.cells tbody .active-cell {
    position: relative;
    outline: 2px solid #217346;
    outline-offset: -1px;
}

.active-cell::after {
    content: "";
    position: absolute;
    right: -2px;
    bottom: -2px;
    width: 4px;
    height: 4px;
    background: #217346;
    border: 1px solid #fff;
    box-sizing: content-box;
}

.cells .partial {
    height: 5px;
}

.cells .partial td,
.cells .partial th {
    border-bottom: 0;
}

.cells .partial .plain:not(.edge) {
    border-right: 0;
}

.picture {
    position: absolute;
    left: 36px;
    right: 297px;
    background: #fff;
}

.scenario {
    top: 27px;
    height: 217px;
    padding: 26px 8px 0 21px;
    font-family: "Liberation Sans", Arial, sans-serif;
    font-size: 21px;
    line-height: 25px;
    color: #626262;
}

.scenario p {
    height: 152px;
    display: flex;
    flex-direction: column;
    justify-content: space-between;
}

.scenario span {
    white-space: nowrap;
    text-align-last: justify;
}

.scenario span:last-child {
    text-align-last: left;
}

.requirements {
    top: 262px;
    height: 157px;
    padding: 4px 0 0 15px;
    font-family: Inter, sans-serif;
    font-size: 19px;
    line-height: 26px;
    color: #2b1740;
    white-space: nowrap;
}

.requirements h3,
.requirements p {
    font-weight: 600;
}

.requirements h3 {
    margin-bottom: 19px;
}

.requirements .marks {
    font-weight: 300;
}

.resize-cursor {
    position: absolute;
    right: 251px;
    top: 0;
}

/* Scroll bars */
.vscroll {
    width: 17px;
    display: flex;
    flex-direction: column;
    align-items: center;
    padding-top: 2px;
    background: #e6e6e6;
}

.vscroll button,
.hscroll button {
    width: 12px;
    height: 12px;
    background: #fff;
    border: 1px solid #c6c6c6;
}

.track {
    flex: 1;
    background: #dcdcdc;
}

.track span {
    display: block;
    background: #fff;
    border: 1px solid #b5b5b5;
}

.vscroll .track {
    width: 12px;
    padding-top: 226px;
}

.vscroll .track span {
    height: 110px;
}

.arrow {
    border: 3px solid transparent;
}

.arrow.up { border-top: 0; border-bottom-color: #666; }
.arrow.down { border-bottom: 0; border-top-color: #666; }
.arrow.left { border-left: 0; border-right-color: #666; }
.arrow.right { border-right: 0; border-left-color: #666; }
.arrow.left.pale { border-right-color: #bbb; }
.arrow.right.pale { border-left-color: #bbb; }

/* Sheet tabs */
.sheet-tabs {
    flex: none;
    height: 22px;
    display: flex;
    align-items: center;
    padding-right: 15px;
    border-bottom: 1px solid #cfcfcf;
    font-family: "Noto Sans", sans-serif;
}

.sheet-nav {
    width: 81px;
    display: flex;
    gap: 20px;
    padding-left: 21px;
}

.tab {
    height: 16px;
    padding: 0 10px;
    color: #555;
    border-left: 1px solid #aaa;
}

.tab.current {
    align-self: flex-start;
    height: 20px;
    padding: 0 8px;
    font-weight: bold;
    color: #217346;
    background: #fff;
    border-right: 1px solid #aaa;
    border-bottom: 2px solid #217346;
}

.new-sheet {
    margin: 0 auto 0 26px;
}

.hscroll {
    width: 483px;
    display: flex;
    margin-left: 12px;
}

.hscroll .track {
    height: 12px;
}

.hscroll .track span {
    width: 425px;
    height: 12px;
}

/* Status bar */
.status {
    flex: none;
    height: 18px;
    display: flex;
    align-items: center;
    padding: 0 6px;
    background: #f1f1f1;
    color: #444;
}

.macro {
    margin-left: 14px;
}

.views {
    align-self: stretch;
    display: flex;
    margin-left: auto;
}

.views button {
    width: 30px;
}

.views .on {
    background: #cbcbcb;
}

.zoom {
    display: flex;
    align-items: center;
    margin-left: 3px;
}

.zoom button {
    width: 11px;
    font-size: 12px;
    font-weight: bold;
}

.zoom input {
    appearance: none;
    width: 80px;
    height: 9px;
    background: linear-gradient(#aaa, #aaa) center / 100% 1px no-repeat;
}

.zoom input::-webkit-slider-thumb {
    appearance: none;
    width: 4px;
    height: 9px;
    background: #666;
}

.zoom span {
    margin-left: 6px;
}

/* Taskbar */
.taskbar {
    flex: none;
    height: 38px;
    display: grid;
    grid-template-columns: 1fr auto 1fr;
    align-items: center;
    background: linear-gradient(to right, #162b34, #182c39 60%, #132347);
    color: #f1f4f6;
}

.weather {
    position: relative;
    display: flex;
    align-items: center;
    gap: 2px;
    padding-left: 14px;
}

.badge {
    position: absolute;
    left: 25px;
    top: 0;
    width: 12px;
    height: 12px;
    line-height: 12px;
    font-size: 9px;
    text-align: center;
    background: #c42b1c;
    border-radius: 50%;
}

.apps {
    display: flex;
    align-items: center;
    height: 38px;
}

.apps button {
    position: relative;
    width: 35px;
    height: 34px;
}

.apps .running::after {
    content: "";
    position: absolute;
    bottom: 1px;
    width: 5px;
    height: 2px;
    border-radius: 1px;
    background: #9aa7ae;
}

.apps .focused::after {
    width: 12px;
    background: #64b5e6;
}

.apps .focused {
    background: rgba(255, 255, 255, 0.05);
    border-radius: 3px;
}

.zoom-app b {
    width: 20px;
    height: 20px;
    line-height: 18px;
    font-size: 11px;
    border-radius: 50%;
    background: #0b5cff;
}

.search {
    width: 173px;
    height: 24px;
    display: flex;
    align-items: center;
    margin: 0 3px;
    padding: 0 2px 0 8px;
    border-radius: 12px;
    background: #f0f4f5;
}

.search input {
    flex: 1;
    width: 60px;
    padding-left: 7px;
    font-size: 11px;
    color: #333;
}

.search input::placeholder {
    color: #666;
}

.tray {
    display: flex;
    align-items: center;
    justify-content: flex-end;
    gap: 15px;
    padding-right: 16px;
}

.tray p {
    margin-left: -2px;
    margin-right: -8px;
    text-align: right;
}
```
FILE: script.js
```html
// Builds rows 35-51 and the sliver of row 52
const rows = document.getElementById("rows");

for (let n = 35; n <= 52; n++) {
    const tr = document.createElement("tr");
    if (n === 51) tr.className = "current";
    if (n === 52) tr.className = "partial";

    let columnL = "column-l";
    if (n < 49 || n === 51) columnL += " covered";
    if (n < 43) columnL += " deep";

    let html = "<th>" + (n < 52 ? n : "") + "</th>";
    for (let c = 0; c < 11; c++) {
        html += '<td class="plain' + (c === 10 ? " edge" : "") + '"></td>';
    }
    html += '<td class="' + columnL + '"></td><td></td><td colspan="2"></td>';
    html += '<td colspan="2"' + (n === 51 ? ' class="active-cell"' : "") + "></td><td></td>";
    tr.innerHTML = html;
    rows.appendChild(tr);
}
```
